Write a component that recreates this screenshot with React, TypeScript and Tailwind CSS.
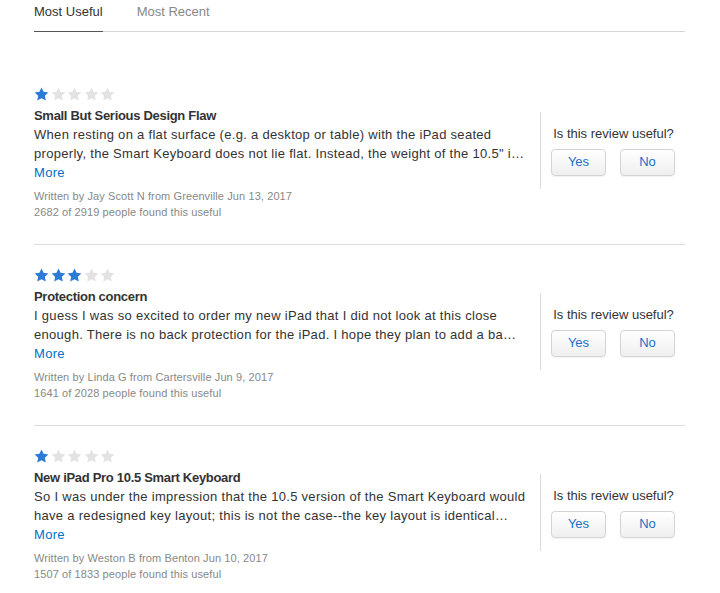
import React from "react";

type Review = {
  stars: number;
  title: string;
  lines: [string, string];
  author: string;
  place: string;
  date: string;
  useful: string;
};

const reviews: Review[] = [
  {
    stars: 1,
    title: "Small But Serious Design Flaw",
    lines: [
      "When resting on a flat surface (e.g. a desktop or table) with the iPad seated",
      "properly, the Smart Keyboard does not lie flat. Instead, the weight of the 10.5\" i…",
    ],
    author: "Jay Scott N",
    place: "Greenville",
    date: "Jun 13, 2017",
    useful: "2682 of 2919 people found this useful",
  },
  {
    stars: 3,
    title: "Protection concern",
    lines: [
      "I guess I was so excited to order my new iPad that I did not look at this close",
      "enough. There is no back protection for the iPad. I hope they plan to add a ba…",
    ],
    author: "Linda G",
    place: "Cartersville",
    date: "Jun 9, 2017",
    useful: "1641 of 2028 people found this useful",
  },
  {
    stars: 1,
    title: "New iPad Pro 10.5 Smart Keyboard",
    lines: [
      "So I was under the impression that the 10.5 version of the Smart Keyboard would",
      "have a redesigned key layout; this is not the case--the key layout is identical…",
    ],
    author: "Weston B",
    place: "Benton",
    date: "Jun 10, 2017",
    useful: "1507 of 1833 people found this useful",
  },
];

function Star({ filled }: { filled: boolean }) {
  return (
    <svg width="15" height="14" viewBox="0 0 24 23" className="shrink-0">
      <path
        d="M12 0.8l3.4 7.2 7.9 1-5.8 5.5 1.5 7.8L12 18.5l-7 3.8 1.5-7.8L0.7 9l7.9-1z"
        fill={filled ? "#2b7bd6" : "#e3e3e3"}
      />
    </svg>
  );
}

function ReviewItem({ review, first }: { review: Review; first: boolean }) {
  return (
    <div className={first ? "pt-[54px] pb-6" : "pt-[22px] pb-6 border-t border-[#dcdcdc]"}>
      <div className="flex items-center gap-[1.5px] h-4">
        {[0, 1, 2, 3, 4].map((i) => (
          <Star key={i} filled={i < review.stars} />
        ))}
      </div>
      <div className="flex">
        <div className="flex-1 min-w-0">
          <div className="mt-[5px] text-[13px] leading-[18px] font-semibold tracking-[-0.3px] text-[#333]">
            {review.title}
          </div>
          <div className="text-[13px] leading-[19px] tracking-[0.3px] text-[#333]">
            <div className="whitespace-nowrap">{review.lines[0]}</div>
            <div className="whitespace-nowrap">{review.lines[1]}</div>
          </div>
          <div className="text-[13px] leading-[19px] tracking-[0.3px] text-[#0070c9]">More</div>
          <div className="mt-[6px] text-[11px] leading-4 tracking-[0.1px] text-[#888]">
            Written by {review.author} from {review.place} {review.date}
          </div>
          <div className="text-[11px] leading-4 tracking-[0.1px] text-[#888]">{review.useful}</div>
        </div>
        <div className="w-[145px] shrink-0 self-start mt-[10px] h-[77px] border-l border-[#dcdcdc] flex flex-col items-center justify-center">
          <div className="text-[13px] leading-4 text-[#333] pl-[1px]">Is this review useful?</div>
          <div className="mt-[7px] flex gap-[14px]">
            {["Yes", "No"].map((label) => (
              <button
                key={label}
                type="button"
                className="w-[55px] h-[27px] rounded-[4px] border border-[#d4d4d4] bg-gradient-to-b from-white to-[#efefef] text-[13px] text-[#1a6fc9] shadow-[0_1px_1px_rgba(0,0,0,0.05)]"
              >
                {label}
              </button>
            ))}
          </div>
        </div>
      </div>
    </div>
  );
}

export default function App() {
  return (
    <div
      className="min-h-[593px] bg-white px-[34px] overflow-hidden"
      style={{ fontFamily: '"Liberation Sans", Arial, sans-serif' }}
    >
      <div className="w-[651px]">
        <div className="flex border-b border-[#d6d6d6] h-[32px] text-[13px]">
          <div className="relative pt-[2px] text-[#333]">
            Most Useful
            <div className="absolute left-0 right-0 -bottom-px h-[1.5px] bg-[#555]" />
          </div>
          <div className="ml-[34px] pt-[2px] text-[#888]">Most Recent</div>
        </div>
        {reviews.map((r, i) => (
          <ReviewItem key={r.title} review={r} first={i === 0} />
        ))}
      </div>
    </div>
  );
}
